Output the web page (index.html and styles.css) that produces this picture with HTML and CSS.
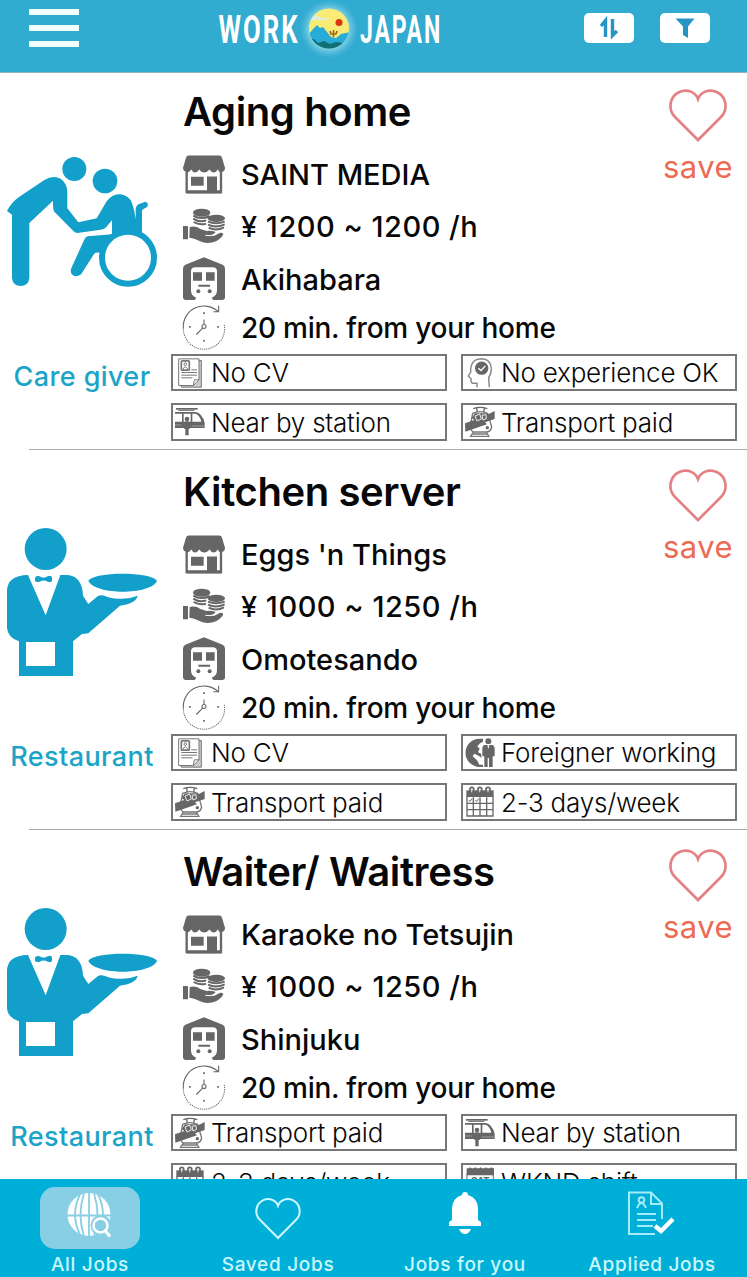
FILE: index.html
```html
<!DOCTYPE html>
<html lang="en">
<head>
<meta charset="utf-8">
<title>Work Japan</title>
<link rel="stylesheet" href="styles.css">
</head>
<body>
<svg class="sprite" aria-hidden="true">
  <symbol id="heart" viewBox="54 23 180 164"><path d="M144 179L75 110C52 87 59 48 88 35C112 24 137 36 144 56C151 36 176 24 200 35C229 48 236 87 213 110Z" fill="none" stroke="currentColor" stroke-width="8"/></symbol>
  <symbol id="caregiver" viewBox="21 21 450 450">
    <circle cx="223" cy="87" r="36"/><circle cx="315" cy="123" r="37"/>
    <path d="M21 213Q34 187 57 171L132 121Q158 104 182 116Q202 129 202 160V205L235 247L290 235L320 184Q338 160 362 163Q386 166 396 189Q405 215 407 238V207Q408 194 424 190L436 185Q447 188 442 200L426 210V278L336 292V241L317 263Q312 268 302 269L232 279Q226 279 220 273L163 215Q158 208 159 182L88 249V414Q85 438 62 438Q39 438 36 414V224Z"/>
    <path d="M336 283L263 289Q256 291 252 301L214 384Q208 401 223 408Q237 410 244 402L282 342Q286 337 300 338L325 300Z"/>
    <circle cx="384" cy="353" r="78" fill="#fff" stroke="currentColor" stroke-width="18"/>
  </symbol>
  <symbol id="waiter" viewBox="21 51 450 450">
    <circle cx="137" cy="117" r="63"/>
    <path d="M84 195L137 316L181 195H198C228 195 248 215 249 257L265 282L291 260Q302 252 317 259Q334 267 361 266Q389 267 413 257Q409 280 360 287L265 370L246 372L219 394V498H57V394Q23 383 21 354V244Q21 196 84 195Z"/>
    <path d="M105 203Q108 196 119 199Q130 207 143 199Q155 194 156 203V212Q153 219 143 215Q131 208 119 215Q108 218 105 212Z"/>
    <path d="M78 396H165V468H78Z" fill="#fff"/>
    <path d="M265 213C281 184 454 184 471 213C450 256 287 256 265 213Z"/>
  </symbol>
  <symbol id="shop" viewBox="39 220.500 126 126">
    <path d="M48 232Q49 225 57 225H147Q155 225 156 232L165 262Q165 273 155 275Q147 276 143 267Q138 276 131 276Q124 276 119 267Q111 276 103 276Q93 276 88 267Q82 276 75 276Q68 276 64 267Q58 276 50 275Q40 273 39 262Z"/>
    <path d="M50 274V335H153V274" fill="none" stroke="currentColor" stroke-width="7"/>
    <path d="M50 329H154V339H50ZM63 289H101V316H63ZM111 288H141V335H111Z"/>
  </symbol>
  <symbol id="coins" viewBox="39 381 126 126">
    <ellipse cx="95" cy="398" rx="26" ry="12"/><ellipse cx="139" cy="415" rx="26" ry="11"/>
    <path d="M70 407Q92 421 119 408M70 416Q86 428 109 421M71 426Q87 436 108 431M114 425Q137 435 164 425M114 434Q138 445 164 433M116 443Q138 454 162 442" fill="none" stroke="currentColor" stroke-width="6"/>
    <path d="M39 438H54V478H39ZM59 441Q78 437 91 447L110 453Q132 451 136 457Q136 464 116 467H133L151 458Q161 457 159 465Q155 474 138 484Q118 492 98 487Q75 475 58 473Z"/>
    <path d="M106 466L120 467Q134 466 136 459" stroke="#fff" stroke-width="3" fill="none"/>
  </symbol>
  <symbol id="station" viewBox="39 537 126 126">
    <path fill-rule="evenodd" d="M102 532L158 554Q165 557 165 566V652Q165 660 156 660H130L125 653Q141 648 141 631V573Q140 562 129 562H75Q64 562 63 573V631Q63 648 79 653L74 660H48Q39 660 39 651V566Q39 557 46 554Z"/>
    <path d="M69 577H96V602H69ZM108 577H134V602H108ZM85 614H120V620H85Z"/>
    <circle cx="85" cy="634" r="6"/><circle cx="119" cy="634" r="6"/>
  </symbol>
  <symbol id="clock" viewBox="39 681.500 126 126">
    <g fill="none" stroke="currentColor" stroke-width="3.200">
      <path d="M40 745A62 62 0 0 1 146 697M146 678V696H130"/>
      <path d="M163 735A62 62 0 1 1 40 745" stroke-dasharray="3.500 3"/>
      <circle cx="102" cy="740" r="6"/><path d="M102 719V734M98 745L79 764"/>
      <path d="M99.500 700H104.500M99.500 783H104.500M57 741H62M142 741H147" stroke-width="5"/>
    </g>
  </symbol>
  <symbol id="cv" viewBox="30 37.500 90 90">
    <path d="M102 45H109V125H49V120H85L102 103Z" fill="#ccc"/>
    <g fill="none" stroke="#777" stroke-width="3">
      <path d="M41 40H102V103L85 120H41Z"/><path d="M102 45H109V125H49V120M85 120L88 103H102"/>
      <rect x="49" y="46" width="24" height="28" rx="3" stroke-width="5"/><circle cx="61" cy="56" r="4"/><path d="M54 71Q61 57 68 71"/>
      <path d="M79 73H96M49 81H96M49 89H96M49 97H82" stroke-width="3"/>
    </g>
  </symbol>
  <symbol id="tram" viewBox="30 186 90 90">
    <path d="M33 189H98V194H33Z"/><path d="M40 196H88" stroke="currentColor" stroke-width="3"/>
    <path fill-rule="evenodd" d="M30 201H93Q112 206 119 233V249H30ZM30 206V230H51V206ZM56 206V230H77V206ZM82 206V230H109Q104 210 92 206Z"/>
    <path d="M30 240H50M80 243H118" stroke="#bbb" stroke-width="2"/>
    <circle cx="66" cy="222" r="7"/><path d="M57 232Q66 225 75 232V251H71V271H61V251H57Z"/>
  </symbol>
  <symbol id="head" viewBox="30 37.500 90 90">
    <path d="M66 125V113H53Q47 112 48 99L40 92L47 80Q45 40 80 40Q108 41 109 71Q109 85 101 96L103 125" fill="none" stroke="#8a8a8a" stroke-width="4.500"/>
    <circle cx="80" cy="68" r="20"/><path d="M70 68L78 75L91 61" fill="none" stroke="#fff" stroke-width="4"/>
  </symbol>
  <symbol id="train" viewBox="30 186 90 90">
    <path d="M55 191Q75 183 97 191M65 190L67 202M88 190L86 202" fill="none" stroke="currentColor" stroke-width="4"/>
    <path d="M53 205Q75 195 98 205L110 246Q107 260 95 261H55Q45 255 46 242Z" fill="#fff" stroke="#777" stroke-width="4"/>
    <path d="M30 235L58 225L50 219L60 205H95L100 208L119 198V222L90 232L96 238L31 260Z"/>
    <path d="M60 213L74 207L79 222L66 228ZM81 211L93 209L94 221L84 225Z" fill="none" stroke="#eee" stroke-width="3"/>
    <circle cx="97" cy="248" r="5"/><path d="M55 261L45 276M94 261L103 276M51 267H98M47 274H102" stroke="#777" stroke-width="4"/>
  </symbol>
  <symbol id="globe-man" viewBox="0 0 90 90">
    <path d="M54 2H44A42.500 42.500 0 0 0 44 87H54V80L43 80L36 67L23 55L28 47L42 54L50 60V48L39 43L44 32L37 25L45 16L54 11Z"/>
    <g stroke="#fff" stroke-width="6" paint-order="stroke"><circle cx="70" cy="10" r="9"/><path d="M56 21H84L89 29V55H83V87H72V60H68V87H58V55H52V29Z"/></g><path d="M67 22L70 33L73 22Z" fill="#fff"/>
  </symbol>
  <symbol id="calendar" viewBox="0 0 90 90">
    <path d="M4 10H86V30H4Z"/><g fill="none" stroke="currentColor" stroke-width="4"><path d="M6 28V87H84V28M25 31V87M45 31V87M65 31V87M6 49H84M6 68H84"/>
    <path d="M15 16V4Q20 -2 26 4V16M39 16V4Q44 -2 50 4V16M63 16V4Q69 -2 75 4V16" stroke-width="5"/><path d="M11 40L15 43L21 35M31 40L35 43L41 35" stroke-width="3"/></g>
    <path d="M20 6V16M44 6V16M69 6V16" stroke="#ddd" stroke-width="3"/>
  </symbol>
  <symbol id="weekend" viewBox="0 0 90 90">
    <path d="M5 4H12L15 1L20 4H27L31 1L35 4H43L47 1L51 4H59L63 1L67 4H75L79 1L83 4H87V25H5Z"/><path d="M6 20V87H85V20" fill="none" stroke="currentColor" stroke-width="3"/>
    <text x="46" y="52" class="sat">SAT</text>
  </symbol>
</svg>

<div class="app">
  <header class="topbar">
    <button class="menu" aria-label="Menu"><span></span><span></span><span></span></button>
    <svg class="brand" viewBox="0 0 240 72">
      <defs>
        <radialGradient id="glow"><stop offset=".65" stop-color="#a4e2f0" stop-opacity=".75"/><stop offset="1" stop-color="#6cc8e2" stop-opacity="0"/></radialGradient>
        <clipPath id="disc"><circle cx="119" cy="28.500" r="20"/></clipPath>
      </defs>
      <text x="8.500" y="42.500" textLength="81" lengthAdjust="spacingAndGlyphs">WORK</text>
      <circle cx="119" cy="29" r="29" fill="url(#glow)"/>
      <g clip-path="url(#disc)">
        <path d="M98 8H140V50H98Z" fill="#f8ec77"/>
        <path d="M98 19L106 15L110 18L118 18L116 20H98Z" fill="#dceee0"/>
        <path d="M98 35L104 28L107 25L110 28L113 27L121 37L126 38L131 34L140 32V50H98Z" fill="#28acd7"/>
        <path d="M98 40L104 39L108 43L114 41L120 44L126 42L133 43L140 40V50H98Z" fill="#116e73"/>
        <path d="M123.500 37V33M120 31L121 34H126L127 31M123.500 34V30" stroke="#9a641d" stroke-width="1.600" fill="none"/>
        <circle cx="129" cy="22.500" r="3.500" fill="#dc3512"/>
      </g>
      <text x="150" y="42.500" textLength="82" lengthAdjust="spacingAndGlyphs">JAPAN</text>
    </svg>
    <div class="tools">
      <button aria-label="Sort"><svg viewBox="0 0 50 30"><path d="M21.500 24V7.500L17 13M28.500 6V22.500L33 18" fill="none" stroke="currentColor" stroke-width="3.400"/></svg></button>
      <button aria-label="Filter"><svg viewBox="0 0 50 30"><path d="M15.500 5.500H34.500L28 13.500V25L23 22V13.500Z"/></svg></button>
    </div>
  </header>

  <main class="jobs">
    <article class="job">
      <div class="category"><svg><use href="#caregiver"/></svg><span>Care giver</span></div>
      <div class="details">
        <h2>Aging home</h2>
        <p><svg><use href="#shop"/></svg><span>SAINT MEDIA</span></p>
        <p><svg><use href="#coins"/></svg><span class="pay">¥ 1200 ~ 1200 /h</span></p>
        <p><svg><use href="#station"/></svg><span class="stop">Akihabara</span></p>
        <p class="travel"><svg><use href="#clock"/></svg><span>20 min. from your home</span></p>
      </div>
      <button class="save"><svg><use href="#heart"/></svg><span>save</span></button>
      <ul class="tags">
        <li><svg><use href="#cv"/></svg><span>No CV</span></li>
        <li><svg><use href="#head"/></svg><span>No experience OK</span></li>
        <li><svg><use href="#tram"/></svg><span>Near by station</span></li>
        <li><svg><use href="#train"/></svg><span>Transport paid</span></li>
      </ul>
    </article>
    <article class="job">
      <div class="category"><svg><use href="#waiter"/></svg><span>Restaurant</span></div>
      <div class="details">
        <h2>Kitchen server</h2>
        <p><svg><use href="#shop"/></svg><span>Eggs 'n Things</span></p>
        <p><svg><use href="#coins"/></svg><span class="pay">¥ 1000 ~ 1250 /h</span></p>
        <p><svg><use href="#station"/></svg><span class="stop">Omotesando</span></p>
        <p class="travel"><svg><use href="#clock"/></svg><span>20 min. from your home</span></p>
      </div>
      <button class="save"><svg><use href="#heart"/></svg><span>save</span></button>
      <ul class="tags">
        <li><svg><use href="#cv"/></svg><span>No CV</span></li>
        <li><svg><use href="#globe-man"/></svg><span>Foreigner working</span></li>
        <li><svg><use href="#train"/></svg><span>Transport paid</span></li>
        <li><svg><use href="#calendar"/></svg><span>2-3 days/week</span></li>
      </ul>
    </article>
    <article class="job">
      <div class="category"><svg><use href="#waiter"/></svg><span>Restaurant</span></div>
      <div class="details">
        <h2>Waiter/ Waitress</h2>
        <p><svg><use href="#shop"/></svg><span>Karaoke no Tetsujin</span></p>
        <p><svg><use href="#coins"/></svg><span class="pay">¥ 1000 ~ 1250 /h</span></p>
        <p><svg><use href="#station"/></svg><span class="stop">Shinjuku</span></p>
        <p class="travel"><svg><use href="#clock"/></svg><span>20 min. from your home</span></p>
      </div>
      <button class="save"><svg><use href="#heart"/></svg><span>save</span></button>
      <ul class="tags">
        <li><svg><use href="#train"/></svg><span>Transport paid</span></li>
        <li><svg><use href="#tram"/></svg><span>Near by station</span></li>
        <li><svg><use href="#calendar"/></svg><span>2-3 days/week</span></li>
        <li><svg><use href="#weekend"/></svg><span>WKND shift</span></li>
      </ul>
    </article>
  </main>

  <nav class="tabs">
    <a class="active"><i><svg viewBox="-2 2.500 50 50"><circle cx="22" cy="24" r="21.500" fill="#fff"/><path d="M0 25H44M22 2V46M13 4Q3 24 13 44M31 4Q41 24 31 44M17 3Q10 24 17 46M27 3Q34 24 27 46" fill="none" stroke="#88cfe6" stroke-width="1.800"/><circle cx="34" cy="35" r="10.500" fill="#88cfe6"/><path d="M37 44L46 49V35H38Z" fill="#88cfe6"/><circle cx="33.500" cy="35" r="7" fill="none" stroke="#fff" stroke-width="2.500"/><path d="M38 40L43 46" stroke="#fff" stroke-width="3"/></svg></i><span>All Jobs</span></a>
    <a><i><svg class="tab-heart"><use href="#heart"/></svg></i><span>Saved Jobs</span></a>
    <a><i><svg viewBox="0 5 50 50"><path fill="#fff" d="M25 4Q28 4 28 7Q38 10 38 21V32L41 34V38H9V34L12 32V21Q12 10 22 7Q22 4 25 4ZM19 41H31Q29 46 25 46Q21 46 19 41Z"/></svg></i><span>Jobs for you</span></a>
    <a><i><svg viewBox="-3 5 50 50"><g fill="none" stroke="#a6ecf8" stroke-width="2"><path d="M25 46H-1V4.500H21L32 15.500V31M21 5V16H32"/><circle cx="11.500" cy="12" r="2.800"/><path d="M7 20Q11.500 10 16 20M7 26H26M7 32H26M7 38H23" /></g><path d="M25 38L31 43L43 31" fill="none" stroke="#fff" stroke-width="4.500"/></svg></i><span>Applied Jobs</span></a>
  </nav>
</div>
</body>
</html>
```
FILE: styles.css
```css
* { box-sizing: border-box; }
body { margin: 0; font-family: Inter, "Liberation Sans", sans-serif; background: #fff; color: #080808; }
h2, p, ul { margin: 0; padding: 0; }
ul { list-style: none; }
button { border: 0; padding: 0; background: none; font: inherit; color: inherit; }
svg { display: block; flex: none; overflow: visible; fill: currentColor; }
symbol { overflow: visible; }
.sprite { position: absolute; width: 0; height: 0; }
.app { display: flex; flex-direction: column; height: 1277px; overflow: hidden; }

.topbar { position: relative; z-index: 1; flex: none; display: grid; grid-template-columns: 210px 240px 1fr; height: 73px; background: #32abd1; border-bottom: 1px solid #91b3bd; }
.menu { display: flex; flex-direction: column; gap: 10px; align-self: start; width: 50px; margin: 9px 0 0 29px; }
.menu span { height: 6px; background: #f2ffff; }
.brand { width: 240px; height: 72px; fill: #fff; font: 700 38px Roboto, sans-serif; }
.brand text { letter-spacing: 3px; }
.tools { display: flex; gap: 26px; padding: 13px 0 0 134px; }
.tools button { width: 50px; height: 30px; border-radius: 5px; background: #fff; color: #2695c5; }
.tools svg { width: 50px; height: 30px; }

.jobs { flex: 1; min-height: 0; overflow: hidden; margin-top: -3px; }
.job { display: grid; grid-template-columns: 171px 1fr 98px; grid-template-rows: 284px 95px 1px; height: 380px; }
.job::after { content: ""; grid-column: 1 / -1; grid-row: 3; margin-left: 29px; background: #aaa; }
.category { grid-row: 1 / 3; display: flex; flex-direction: column; padding-top: 77px; color: #129fc9; }
.category svg { width: 150px; height: 150px; margin-left: 7px; }
.category span { width: 164px; margin-top: 60px; line-height: 40px; text-align: center; font-size: 27px; font-weight: 500; letter-spacing: .4px; color: #1ba4c6; white-space: nowrap; }
.details { grid-column: 2; padding: 6px 0 0 12px; white-space: nowrap; }
.details h2 { font-size: 40px; line-height: 72px; font-weight: 600; letter-spacing: -.4px; }
.details p { display: flex; align-items: center; gap: 16px; height: 53px; font-size: 29px; font-weight: 500; letter-spacing: 0; }
.details p:nth-of-type(3) { height: 52px; }
.details p.travel { height: 43px; font-size: 28px; letter-spacing: -.25px; }
.details .pay { letter-spacing: .5px; padding-bottom: 2px; }
.details .stop { padding-bottom: 2px; }
.details svg { width: 42px; height: 42px; color: #666; }
.save { grid-column: 3; display: flex; flex-direction: column; align-items: center; justify-self: center; align-self: start; padding-top: 17.500px; color: #ec6b55; font-size: 31px; letter-spacing: .5px; }
.save svg { width: 60px; height: 54.700px; color: #e38184; }
.save span { line-height: 40px; margin-top: 5px; }
.tags { grid-column: 2 / 4; grid-row: 2; display: grid; grid-template-columns: 276px 276px; grid-template-rows: 37px 38px; gap: 12px 14px; white-space: nowrap; }
.tags li { display: flex; align-items: center; gap: 6px; padding-left: 2px; border: 2px solid #777; font-size: 26px; font-weight: 300; letter-spacing: -.22px; }
.tags svg { width: 30px; height: 30px; color: #666; }
.sat { font: 700 28px Inter, sans-serif; text-anchor: middle; }

.tabs { position: relative; flex: none; display: grid; grid-template-columns: 180px 196px 178px 196px; height: 98px; background: #00afd7; color: #c9f8ff; }
.tabs a { display: flex; flex-direction: column; align-items: center; padding-top: 8px; }
.tabs i { display: flex; align-items: center; justify-content: center; width: 100px; height: 62px; border-radius: 15px; }
.tabs .active i { background: #88cfe6; }
.tabs svg { width: 50px; height: 50px; }
.tabs .tab-heart { width: 48px; height: 43px; }
.tabs span { line-height: 32px; font-size: 19px; font-weight: 500; letter-spacing: .7px; }
```
